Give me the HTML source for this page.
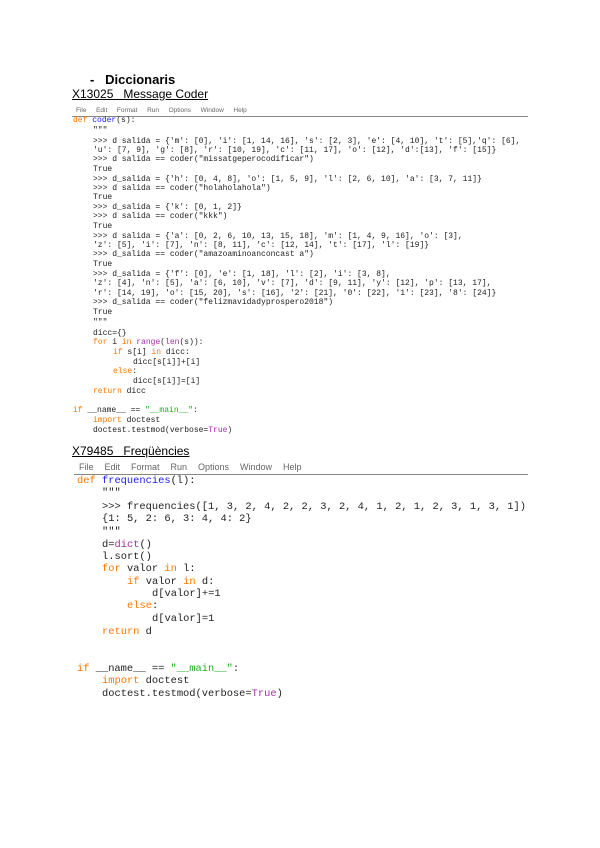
<!DOCTYPE html>
<html><head><meta charset="utf-8"><style>
body{margin:0;width:600px;height:848px;background:#fff;position:relative;overflow:hidden;font-family:"Liberation Sans",sans-serif}
.a{position:absolute;white-space:pre;line-height:1}
.c1 .a{font-family:"Liberation Mono",monospace;font-size:8px;color:#222}
.c2 .a{font-family:"Liberation Mono",monospace;font-size:10.4px;color:#222}
.k{color:#ff7700}.f{color:#2020ff}.s{color:#22aa22}.b{color:#a030a0}
.m{position:absolute;white-space:pre;color:#666}
</style></head><body>
<div class="a" style="left:90px;top:73px;font-size:13px;font-weight:bold">-   Diccionaris</div>
<div class="a" style="left:72px;top:88px;font-size:12px;text-decoration:underline">X13025   Message Coder</div>
<div class="m" style="left:76px;top:107px;font-size:6.5px;word-spacing:3px">File  Edit  Format  Run  Options  Window  Help</div>
<div style="position:absolute;left:72px;top:116px;width:456px;height:1px;background:#888"></div>
<div class="c1">
<div class="a" style="left:73px;top:117px"><span class="k">def</span> <span class="f">coder</span>(s):</div>
<div class="a s" style="left:93px;top:127px">"""</div>
<div class="a s" style="left:93px;top:138px">&gt;&gt;&gt; d salida = {'m': [0], 'i': [1, 14, 16], 's': [2, 3], 'e': [4, 10], 't': [5],'q': [6],</div>
<div class="a s" style="left:93px;top:147px">'u': [7, 9], 'g': [8], 'r': [10, 19], 'c': [11, 17], 'o': [12], 'd':[13], 'f': [15]}</div>
<div class="a s" style="left:93px;top:156px">&gt;&gt;&gt; d salida == coder("missatgeperocodificar")</div>
<div class="a s" style="left:93px;top:166px">True</div>
<div class="a s" style="left:93px;top:176px">&gt;&gt;&gt; d_salida = {'h': [0, 4, 8], 'o': [1, 5, 9], 'l': [2, 6, 10], 'a': [3, 7, 11]}</div>
<div class="a s" style="left:93px;top:185px">&gt;&gt;&gt; d salida == coder("holaholahola")</div>
<div class="a s" style="left:93px;top:194px">True</div>
<div class="a s" style="left:93px;top:204px">&gt;&gt;&gt; d_salida = {'k': [0, 1, 2]}</div>
<div class="a s" style="left:93px;top:213px">&gt;&gt;&gt; d salida == coder("kkk")</div>
<div class="a s" style="left:93px;top:223px">True</div>
<div class="a s" style="left:93px;top:233px">&gt;&gt;&gt; d salida = {'a': [0, 2, 6, 10, 13, 15, 18], 'm': [1, 4, 9, 16], 'o': [3],</div>
<div class="a s" style="left:93px;top:242px">'z': [5], 'i': [7], 'n': [8, 11], 'c': [12, 14], 't': [17], 'l': [19]}</div>
<div class="a s" style="left:93px;top:251px">&gt;&gt;&gt; d_salida == coder("amazoaminoanconcast a")</div>
<div class="a s" style="left:93px;top:261px">True</div>
<div class="a s" style="left:93px;top:271px">&gt;&gt;&gt; d_salida = {'f': [0], 'e': [1, 18], 'l': [2], 'i': [3, 8],</div>
<div class="a s" style="left:93px;top:280px">'z': [4], 'n': [5], 'a': [6, 10], 'v': [7], 'd': [9, 11], 'y': [12], 'p': [13, 17],</div>
<div class="a s" style="left:93px;top:290px">'r': [14, 19], 'o': [15, 20], 's': [16], '2': [21], '0': [22], '1': [23], '8': [24]}</div>
<div class="a s" style="left:93px;top:299px">&gt;&gt;&gt; d_salida == coder("felizmavidadyprospero2018")</div>
<div class="a s" style="left:93px;top:309px">True</div>
<div class="a s" style="left:93px;top:319px">"""</div>
<div class="a" style="left:93px;top:330px">dicc={}</div>
<div class="a" style="left:93px;top:339px"><span class="k">for</span> i <span class="k">in</span> <span class="b">range</span>(<span class="b">len</span>(s)):</div>
<div class="a" style="left:113px;top:349px"><span class="k">if</span> s[i] <span class="k">in</span> dicc:</div>
<div class="a" style="left:133px;top:359px">dicc[s[i]]+[i]</div>
<div class="a" style="left:113px;top:368px"><span class="k">else</span>:</div>
<div class="a" style="left:133px;top:378px">dicc[s[i]]=[i]</div>
<div class="a" style="left:93px;top:388px"><span class="k">return</span> dicc</div>
<div class="a" style="left:73px;top:407px"><span class="k">if</span> __name__ == <span class="s">"__main__"</span>:</div>
<div class="a" style="left:93px;top:417px"><span class="k">import</span> doctest</div>
<div class="a" style="left:93px;top:427px">doctest.testmod(verbose=<span class="b">True</span>)</div>
</div>
<div class="a" style="left:72px;top:445px;font-size:12px;text-decoration:underline">X79485   Freqüències</div>
<div class="m" style="left:79px;top:462px;font-size:9px;word-spacing:3px">File  Edit  Format  Run  Options  Window  Help</div>
<div style="position:absolute;left:74px;top:474px;width:454px;height:1px;background:#888"></div>
<div class="c2">
<div class="a" style="left:77px;top:476px"><span class="k">def</span> <span class="f">frequencies</span>(l):</div>
<div class="a s" style="left:102px;top:488px">"""</div>
<div class="a s" style="left:102px;top:502px">&gt;&gt;&gt; frequencies([1, 3, 2, 4, 2, 2, 3, 2, 4, 1, 2, 1, 2, 3, 1, 3, 1])</div>
<div class="a s" style="left:102px;top:514px">{1: 5, 2: 6, 3: 4, 4: 2}</div>
<div class="a s" style="left:102px;top:527px">"""</div>
<div class="a" style="left:102px;top:540px">d=<span class="b">dict</span>()</div>
<div class="a" style="left:102px;top:552px">l.sort()</div>
<div class="a" style="left:102px;top:564px"><span class="k">for</span> valor <span class="k">in</span> l:</div>
<div class="a" style="left:127px;top:577px"><span class="k">if</span> valor <span class="k">in</span> d:</div>
<div class="a" style="left:152px;top:589px">d[valor]+=1</div>
<div class="a" style="left:127px;top:601px"><span class="k">else</span>:</div>
<div class="a" style="left:152px;top:614px">d[valor]=1</div>
<div class="a" style="left:102px;top:627px"><span class="k">return</span> d</div>
<div class="a" style="left:77px;top:664px"><span class="k">if</span> __name__ == <span class="s">"__main__"</span>:</div>
<div class="a" style="left:102px;top:676px"><span class="k">import</span> doctest</div>
<div class="a" style="left:102px;top:689px">doctest.testmod(verbose=<span class="b">True</span>)</div>
</div>
</body></html>
